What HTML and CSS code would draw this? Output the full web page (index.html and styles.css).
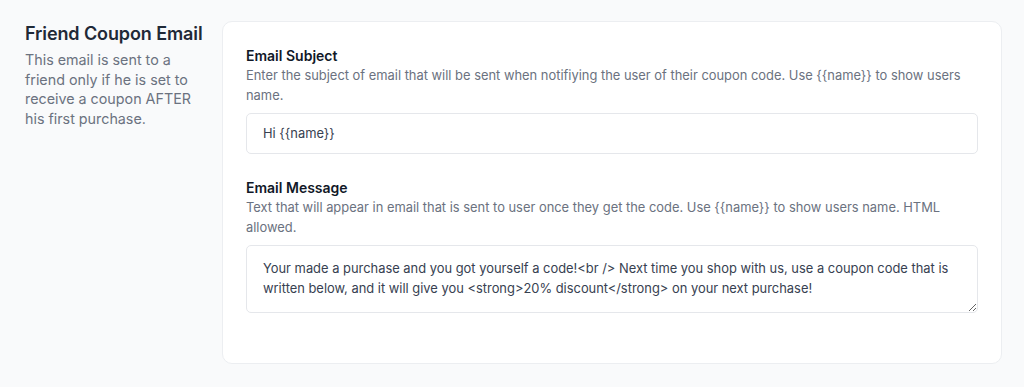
FILE: index.html
```html
<!DOCTYPE html>
<html>
<head>
    <meta name="viewport" content="width=device-width, initial-scale=1.0">
    <title>Friend Coupon Email</title>
    <link rel="stylesheet" href="styles.css">
</head>
<body>
    <div class="section">
        <div class="intro">
            <h2>Friend Coupon Email</h2>
            <p>This email is sent to a friend only if he is set to receive a coupon AFTER his first purchase.</p>
        </div>

        <div class="card">
            <div class="field">
                <label for="subject">Email Subject</label>
                <p class="help">Enter the subject of email that will be sent when notifiying the user of their coupon code. Use {{name}} to show users name.</p>
                <input type="text" id="subject" value="Hi {{name}}">
            </div>
            <div class="field">
                <label for="message">Email Message</label>
                <p class="help">Text that will appear in email that is sent to user once they get the code. Use {{name}} to show users name. HTML allowed.</p>
                <textarea id="message" rows="2">Your made a purchase and you got yourself a code!&lt;br /&gt; Next time you shop with us, use a coupon code that is written below, and it will give you &lt;strong&gt;20% discount&lt;/strong&gt; on your next purchase!</textarea>
            </div>
        </div>
    </div>
</body>
</html>
```

FILE: styles.css
```css
body {
    font-family: Inter, "Noto Sans", sans-serif;
    background: #f9fafb;
    margin: 0;
    color: #111827;
}
.section {
    display: flex;
    gap: 17px;
    padding: 21px 22px 0 25px;
}
.intro {
    width: 180px;
    flex-shrink: 0;
}
.intro h2 {
    font-size: 18px;
    font-weight: 600;
    color: #1f2937;
    margin: 0;
    line-height: 26px;
    letter-spacing: -0.1px;
}
.intro p {
    font-size: 14.3px;
    line-height: 19.5px;
    color: #6b7280;
    margin: 3px 0 0;
}
.card {
    flex: 1;
    background: white;
    border: 1px solid #eceef1;
    border-radius: 10px;
    padding: 24px 23px 50px 23px;
    display: flex;
    flex-direction: column;
    gap: 24px;
}
.field label {
    display: block;
    font-size: 14px;
    font-weight: 600;
    line-height: 20px;
    color: #111827;
}
.field .help {
    font-size: 12.9px;
    line-height: 20px;
    color: #6b7280;
    margin: 0 0 7px;
}
.field input, .field textarea {
    display: block;
    width: 100%;
    box-sizing: border-box;
    font-family: inherit;
    font-size: 12.9px;
    line-height: 20px;
    color: #374151;
    border: 1px solid #e5e7eb;
    border-radius: 5px;
    background: white;
    padding: 10px 16px;
    margin: 0;
}
.field input {
    height: 41px;
}
.field textarea {
    height: 68px;
    padding-top: 13px;
    resize: vertical;
}
```
